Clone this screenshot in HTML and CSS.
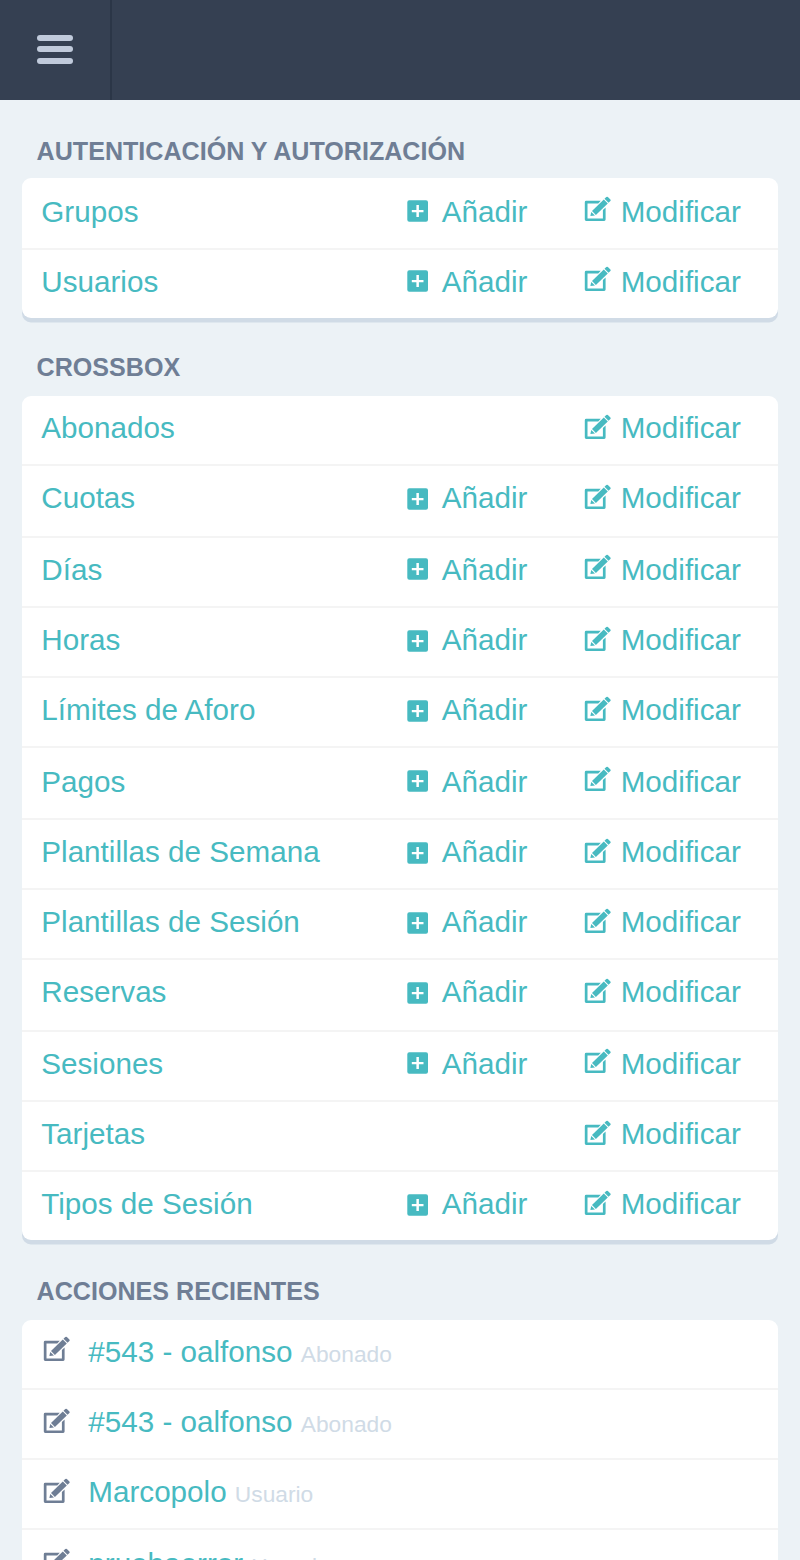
FILE: index.html
```
<!DOCTYPE html>
<html lang="es">
<head>
<meta charset="utf-8">
<title>Administración</title>
<link rel="stylesheet" href="styles.css">
</head>
<body>
<svg class="sprite" aria-hidden="true">
  <symbol id="add" viewBox="0 0 22 22">
    <path fill-rule="evenodd" d="M2 .3H19Q21 .3 21 2.3V19.7Q21 21.7 19 21.7H2.3Q.3 21.7 .3 19.7V2.3Q.3 .3 2.3 .3ZM9.4 5V9.9H4.8V12.3H9.4V17H11.9V12.3H16.5V9.9H11.9V5Z"/>
  </symbol>
  <symbol id="edit" viewBox="0 0 28 26">
    <path d="M16.8 4.8H2.2Q.8 4.8 .8 6.2V23.6Q.8 25 2.2 25H20.2Q21.6 25 21.6 23.6V11.6L18.9 14V22.4H3.5V7.4H14.2Z"/>
    <path d="M8 15 19.8 3.4 23.8 7.4 11.9 19Z"/>
    <path d="M7.2 15.9 11 19.5 6.4 20.1Z"/>
    <path d="M20.5 2.7 22.3 1Q23.1.3 23.9 1L26.4 3.5Q27.1 4.3 26.4 5L24.5 6.7Z"/>
  </symbol>
</svg>
<header class="topbar"><button class="menu" aria-label="Menú"><span></span><span></span><span></span></button></header>
<main class="content" id="content"></main>
<script src="app.js"></script>
</body>
</html>
```
FILE: styles.css
```
html, body { margin: 0; height: 1560px; overflow: hidden; }
body { background: #ecf2f6; font-family: "Liberation Sans", Arial, sans-serif; color: #6f7e95; }
.sprite { position: absolute; width: 0; height: 0; }
.topbar { height: 100px; background: #354052; display: flex; }
.menu { box-sizing: border-box; width: 112px; height: 100px; padding: 35px 36.5px; border: 0; border-right: 2px solid #2b3647; background: none; display: flex; flex-direction: column; gap: 5.4px; }
.menu span { flex: none; width: 36.5px; height: 6px; border-radius: 3px; background: #c0cadb; }
.content { padding: 0 22px; }
.title { box-sizing: border-box; height: 78px; margin: 0; padding: 36px 14.6px 0; font-size: 25.1px; line-height: 30px; font-weight: bold; white-space: nowrap; }
.title.middle { height: 78px; padding-top: 34px; }
.title.last { height: 80px; padding-top: 36px; }
.card { background: #fff; border-radius: 9px; box-shadow: 0 4.5px 0 #d0dbe6; }
.row { box-sizing: border-box; height: 70px; padding: 12px 20px 0 19.3px; border-bottom: 2px solid #f4f4f4; display: grid; grid-template-columns: 365.7px 178px 1fr; align-items: start; font-size: 29.64px; line-height: 40px; white-space: nowrap; color: #47bac1; }
.row.tall { height: 72px; }
.row.low { padding-top: 14px; }
.row:last-child { border-bottom: 0; height: 68px; }
.action { display: flex; }
.icon { flex: none; fill: currentColor; }
.icon.add { width: 22px; height: 22px; margin: 10px 12.8px 0 0; }
.icon.edit { width: 28px; height: 26px; margin: 6px 8.7px 0 -1px; }
.row.up .add { margin-top: 8px; }
.row.up .edit { margin-top: 4px; }
.row.low.up .add { margin-top: 8px; }
.row.recent { grid-template-columns: 47px 1fr; }
.recent .icon.edit { margin-left: 2px; color: #6f7e95; }
.kind { font-size: 22.75px; color: #d0dbe6; }
```
FILE: app.js
```
const icon = name => `<svg class="icon ${name}"><use href="#${name}"/></svg>`;
const action = (name, label) => `<span class="action">${icon(name)}<span>${label}</span></span>`;
const model = ([name, cls = "", add = true]) =>
  `<div class="row ${cls}"><span>${name}</span>${add ? action("add", "Añadir") : "<span></span>"}${action("edit", "Modificar")}</div>`;
const recent = ([name, kind, cls = ""]) =>
  `<div class="row recent ${cls}">${icon("edit")}<span>${name} <span class="kind">${kind}</span></span></div>`;
const section = (title, cls, rows) => `<h2 class="title ${cls}">${title}</h2><div class="card">${rows.join("")}</div>`;

document.getElementById("content").innerHTML =
  section("AUTENTICACIÓN Y AUTORIZACIÓN", "", [["Grupos", "tall low up"], ["Usuarios", "up"]].map(model)) +
  section("CROSSBOX", "middle", [
    ["Abonados", "", false], ["Cuotas", "tall"], ["Días", "up"], ["Horas"],
    ["Límites de Aforo"], ["Pagos", "tall low up"], ["Plantillas de Semana"],
    ["Plantillas de Sesión"], ["Reservas", "tall"], ["Sesiones", "up"],
    ["Tarjetas", "", false], ["Tipos de Sesión"]
  ].map(model)) +
  section("ACCIONES RECIENTES", "last", [
    ["#543 - oalfonso", "Abonado", "up"], ["#543 - oalfonso", "Abonado"],
    ["Marcopolo", "Usuario"], ["pruebaerror", "Usuario", "low up"]
  ].map(recent));
```
